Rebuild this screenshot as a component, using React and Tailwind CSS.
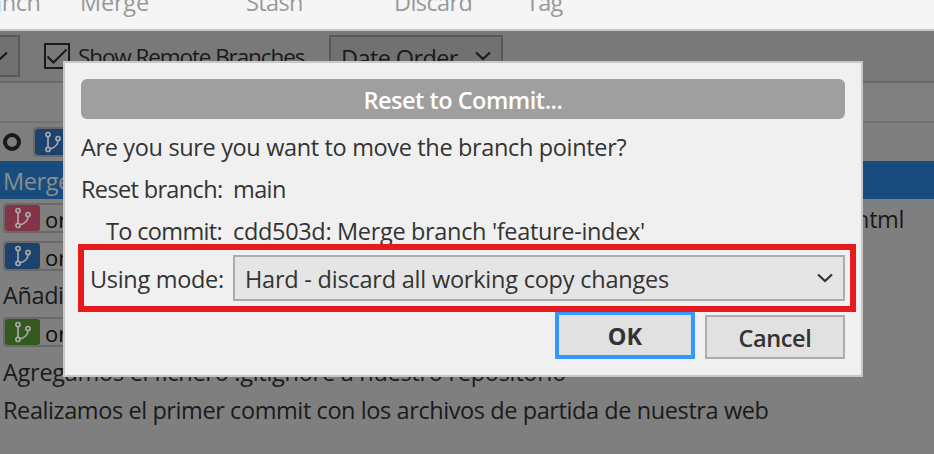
const SANS = 'font-["Segoe_UI","Open_Sans","Noto_Sans",sans-serif]';

function Chevron({ className }) {
  return (
    <svg className={className} width="16" height="10" viewBox="0 0 16 10" fill="none" stroke="currentColor" strokeWidth="2.2">
      <path d="M1 1.5 8 8l7-6.5" />
    </svg>
  );
}

function BranchIcon() {
  return (
    <svg width="18" height="22" viewBox="0 0 18 22" fill="none" stroke="#a9a9a9" strokeWidth="1.7">
      <circle cx="4" cy="3.6" r="2.1" />
      <circle cx="4" cy="18.4" r="2.1" />
      <circle cx="14" cy="7.6" r="2.1" />
      <path d="M4 5.7v10.6M14 9.7c0 4.5-4.500 7.300-8 8.200" />
    </svg>
  );
}

function Badge({ color, children }) {
  return (
    <div className="flex h-[30px] w-[300px] items-center overflow-hidden rounded-[4px] border-2 border-[#696969] bg-[#7f7f7f]">
      <div className={`flex h-full w-[35px] shrink-0 items-center justify-center rounded-[3px] ${color}`}>
        <BranchIcon />
      </div>
      <span className="ml-[5px] pt-[2px] text-[22px] text-[#0c0c0c]">{children}</span>
    </div>
  );
}

function Row({ className = "", children }) {
  return <div className={`flex h-[38px] shrink-0 items-center whitespace-pre pl-[3px] ${className}`}>{children}</div>;
}

function Toolbar() {
  return (
    <div className="flex h-[31px] shrink-0 border-b-2 border-[#c8c8c8] bg-[#f5f5f5] text-[#999]">
      <div className="-mt-[15px] flex h-9 items-center leading-none">
        <span className="-ml-[35px] w-[115px] tracking-[-0.4px]">Branch</span>
        <span className="w-[166px] tracking-[-0.2px]">Merge</span>
        <span className="w-[148px] tracking-[-0.6px]">Stash</span>
        <span className="w-[132px] tracking-[-0.6px]">Discard</span>
        <span className="tracking-[-0.8px]">Tag</span>
      </div>
    </div>
  );
}

function Filters() {
  return (
    <div className="flex h-[52px] shrink-0 items-start border-b-2 border-[#696969] bg-[#797979] pt-1 text-[#1a1a1a]">
      <div className="flex h-[42px] w-5 items-center border-2 border-l-0 border-[#595959] bg-[#717171]">
        <Chevron className="-ml-2 shrink-0" />
      </div>
      <div className="ml-6 mt-2 flex size-[26px] items-center justify-center border-2 border-[#1a1a1a]">
        <svg width="20" height="16" viewBox="0 0 20 16" fill="none" stroke="currentColor" strokeWidth="2">
          <path d="M.5 8.500 6.500 14.500 19.500 1.500" />
        </svg>
      </div>
      <span className="ml-2 mt-[7px] w-[251px] text-[22.5px] leading-[30px] tracking-[-1.1px]">Show Remote Branches</span>
      <div className="flex h-[42px] w-[174px] items-center border-2 border-[#595959] bg-[#717171] pl-[10px]">
        <span className="w-[134px] pt-1 tracking-[-0.6px]">Date Order</span>
        <Chevron />
      </div>
    </div>
  );
}

function Dialog() {
  return (
    <div className="absolute left-[63px] top-[61px] flex h-[316px] w-[800px] flex-col border-2 border-[#c8c8c8] bg-[#f0f0f0] px-4 pt-4 text-[#333]">
      <div className="flex h-10 shrink-0 items-center justify-center rounded-[6px] bg-[#9f9f9f] pt-[2px] font-semibold text-white">
        <span className="tracking-[-0.5px]">Reset to Commit...</span>
      </div>
      <div className="mt-[7px] h-[42px] leading-[42px] tracking-[-0.35px]">Are you sure you want to move the branch pointer?</div>
      <div className="flex h-[42px] leading-[42px]">
        <span className="w-[152px] tracking-[-0.65px]">Reset branch:</span>
        <span className="tracking-[-0.6px]">main</span>
      </div>
      <div className="flex h-[42px] leading-[42px]">
        <span className="ml-[25px] w-[127px] tracking-[-0.65px]">To commit:</span>
        <span className="tracking-[-0.33px]">cdd503d: Merge branch 'feature-index'</span>
      </div>
      <div className="mt-[3px] flex h-[46px] shrink-0 items-center">
        <span className="ml-[9px] w-[143px] pt-[2px] tracking-[-0.3px]">Using mode:</span>
        <div className="flex h-[46px] w-[612px] items-center justify-between border-2 border-[#acacac] bg-[#e5e5e5] pl-[10px] pr-[10px]">
          <span className="pt-[2px] tracking-[-0.22px]">Hard - discard all working copy changes</span>
          <Chevron />
        </div>
      </div>
      <div className="mt-[10px] flex items-end justify-end gap-[10px]">
        <button className="flex h-12 w-[140px] items-center justify-center border-4 border-[#3399ff] bg-[#e1e1e1] pt-[2px] font-bold">OK</button>
        <button className="flex h-11 w-[140px] items-center justify-center border-2 border-[#acacac] bg-[#e1e1e1] pt-[2px] font-semibold tracking-[-0.4px]">Cancel</button>
      </div>
    </div>
  );
}

export default function App() {
  return (
    <div className={`relative flex h-[454px] w-[934px] flex-col overflow-hidden whitespace-nowrap bg-[#7f7f7f] text-[23.5px] leading-[30px] text-[#1a1a1a] ${SANS}`}>
      <Toolbar />
      <Filters />
      <div className="h-10 shrink-0 border-b-2 border-[#727272] bg-[#808080]" />
      <Row>
        <div className="mr-[12px] size-[18px] rounded-full border-4 border-[#1a1a1a]" />
        <Badge color="bg-[#1b436d]">main</Badge>
      </Row>
      <Row className="bg-[#194c7f] pt-[2px] text-[#8c8c8c]"><span className="tracking-[-0.4px]">Merge branch 'feature-index'</span></Row>
      <Row>
        <Badge color="bg-[#853447]">origin</Badge>
        <span className="ml-auto mr-[30px] pt-[2px] tracking-[-0.4px]">index.html</span>
      </Row>
      <Row><Badge color="bg-[#1b436d]">origin</Badge></Row>
      <Row className="pt-[2px]"><span className="tracking-[-0.4px]">Añadimos</span></Row>
      <Row><Badge color="bg-[#34591f]">origin</Badge></Row>
      <Row className="pt-[3px]"><span className="tracking-[-0.28px]">Agregamos el fichero .gitignore a nuestro repositorio</span></Row>
      <Row className="pt-[3px]"><span className="tracking-[-0.41px]">Realizamos el primer commit con los archivos de partida de nuestra web</span></Row>
      <Dialog />
      <div className="absolute left-[78px] top-[244px] h-[68px] w-[778px] border-[6px] border-[#e71b1b]" />
    </div>
  );
}
